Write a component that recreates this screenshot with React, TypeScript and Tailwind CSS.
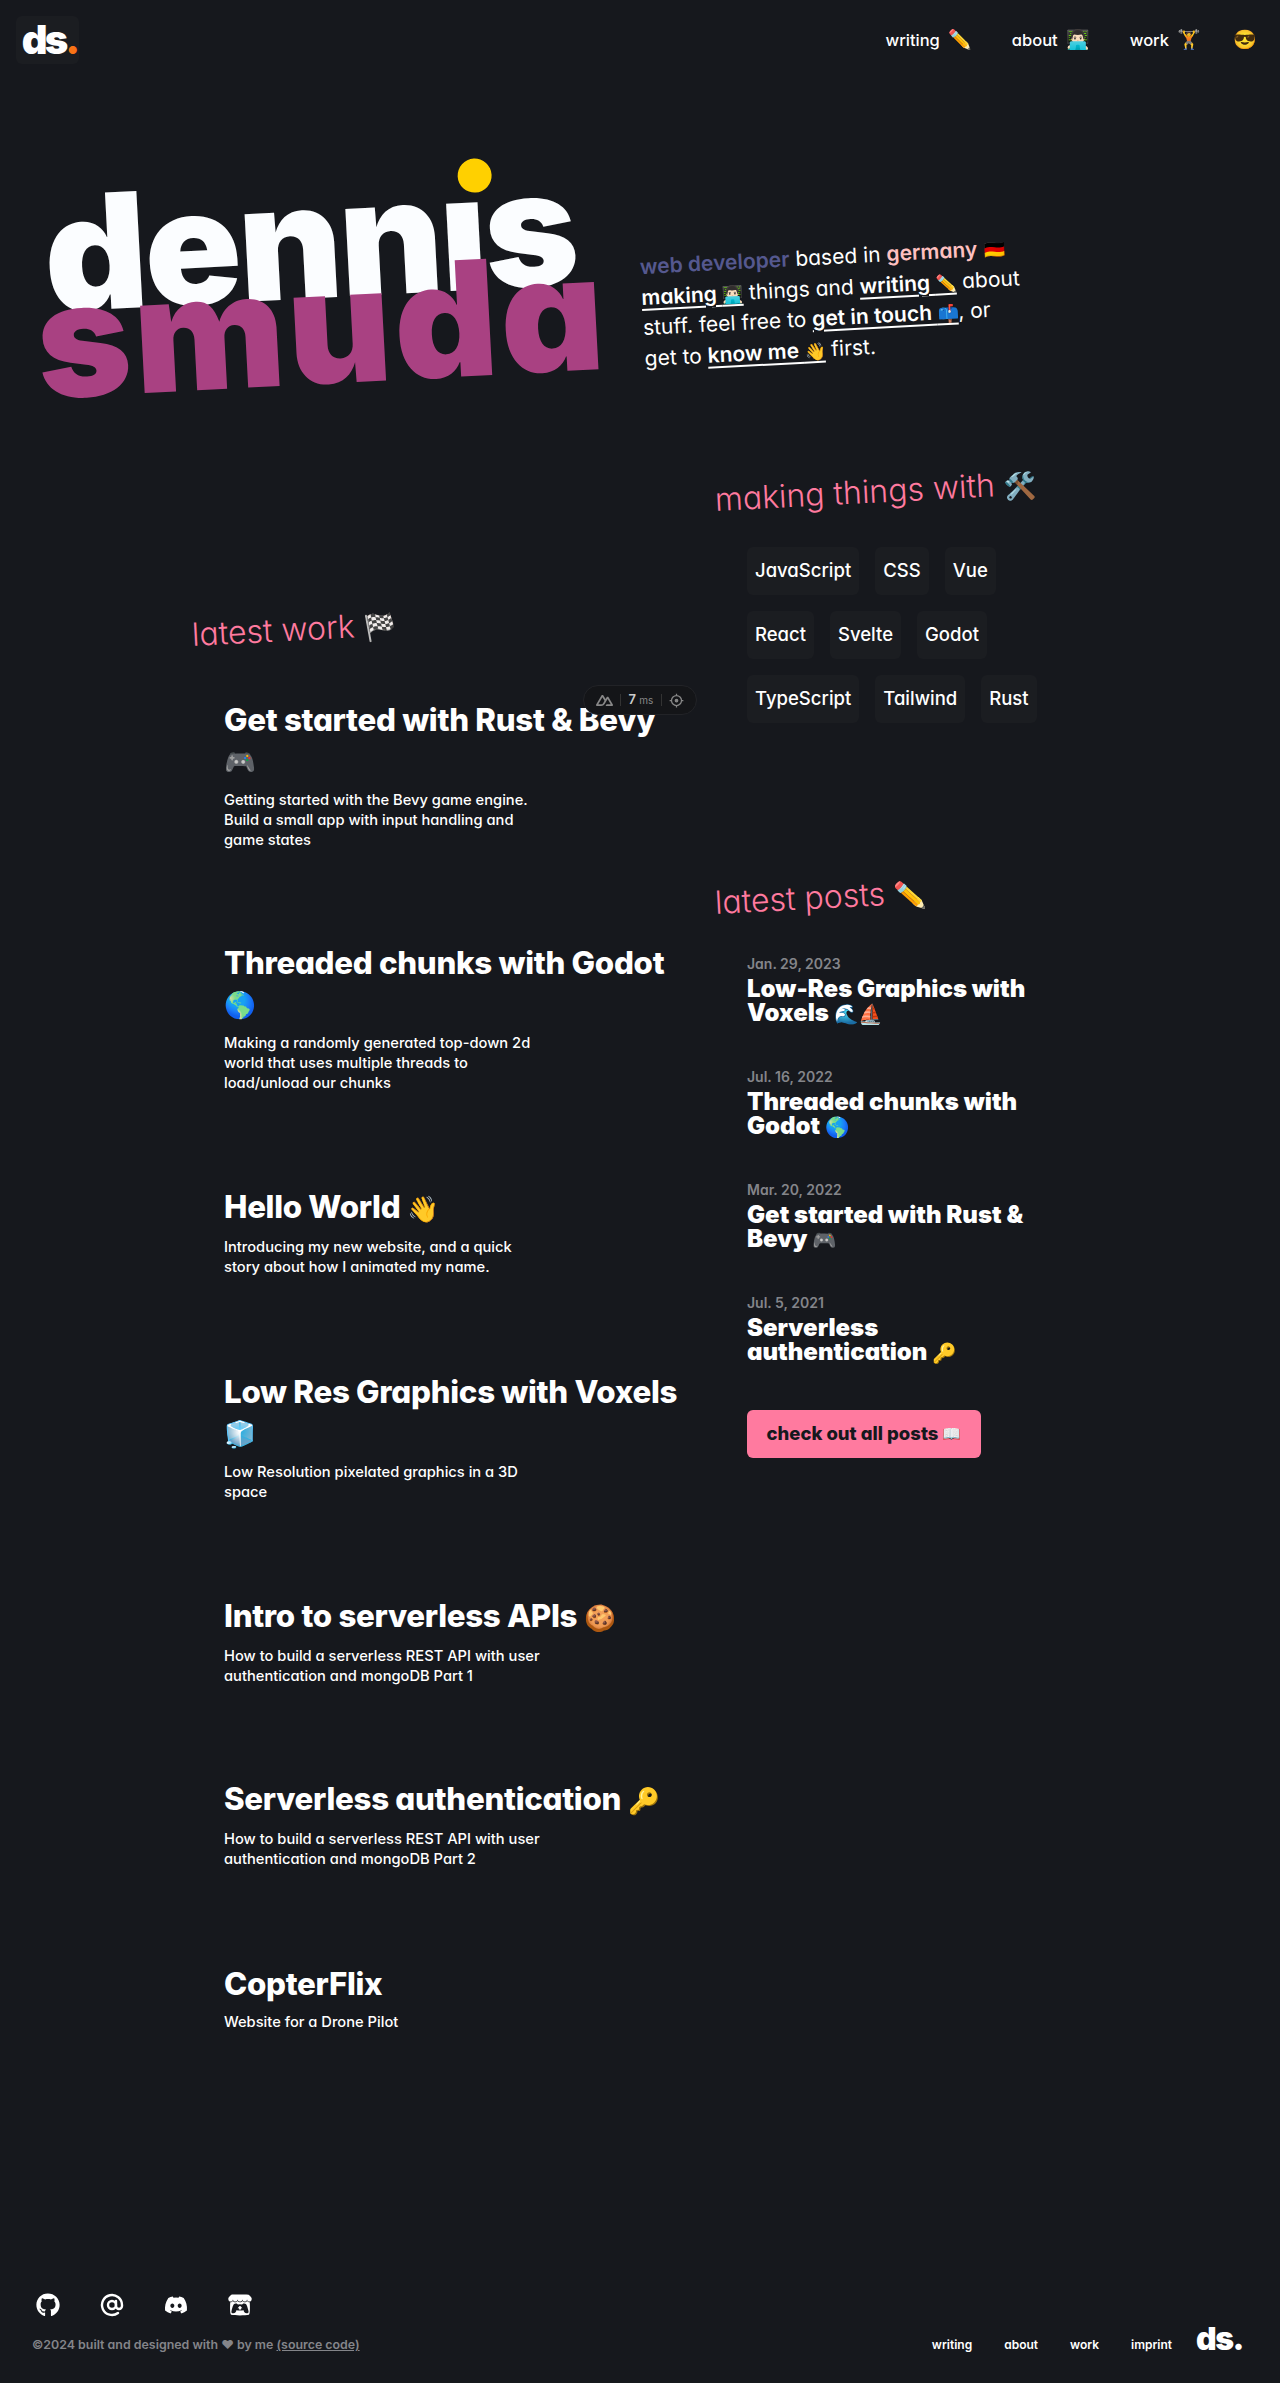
import React from "react";
import { AtSign } from "lucide-react";
import { FaDiscord, FaGithub, FaItchIo } from "react-icons/fa";
import { SiNuxtdotjs } from "react-icons/si";

const chips = [
  ["JavaScript", "CSS", "Vue"],
  ["React", "Svelte", "Godot"],
  ["TypeScript", "Tailwind", "Rust"],
];

const work = [
  { title: "Get started with Rust & Bevy", emoji: "🎮", text: "Getting started with the Bevy game engine. Build a small app with input handling and game states", h: "h-[243px]" },
  { title: "Threaded chunks with Godot", emoji: "🌎", text: "Making a randomly generated top-down 2d world that uses multiple threads to load/unload our chunks", h: "h-[244px]" },
  { title: "Hello World", emoji: "👋", text: "Introducing my new website, and a quick story about how I animated my name.", h: "h-[185px]" },
  { title: "Low Res Graphics with Voxels", emoji: "🧊", text: "Low Resolution pixelated graphics in a 3D space", h: "h-[224px]" },
  { title: "Intro to serverless APIs", emoji: "🍪", text: "How to build a serverless REST API with user authentication and mongoDB Part 1", h: "h-[183px]" },
  { title: "Serverless authentication", emoji: "🔑", text: "How to build a serverless REST API with user authentication and mongoDB Part 2", h: "h-[185px]" },
  { title: "CopterFlix", emoji: "", text: "Website for a Drone Pilot", h: "h-[100px]" },
];

const posts = [
  { date: "Jan. 29, 2023", title: "Low-Res Graphics with Voxels", emoji: "🌊⛵" },
  { date: "Jul. 16, 2022", title: "Threaded chunks with Godot", emoji: "🌎" },
  { date: "Mar. 20, 2022", title: "Get started with Rust & Bevy", emoji: "🎮" },
  { date: "Jul. 5, 2021", title: "Serverless authentication", emoji: "🔑" },
];

function Emoji({ children }: { children: React.ReactNode }) {
  return <span className="text-[0.82em]">{children}</span>;
}

function Heading({ children, className }: { children: React.ReactNode; className?: string }) {
  return (
    <h2 className={`w-fit origin-left -rotate-3 text-[32px] leading-10 font-light text-[#ff7a9f] ${className ?? ""}`}>
      {children}
    </h2>
  );
}

function Link({ children }: { children: React.ReactNode }) {
  return <a className="font-semibold text-white underline underline-offset-4">{children}</a>;
}

export default function App() {
  return (
    <div className="relative flex min-h-[2383px] flex-col bg-[#16181d] font-['Inter','Liberation_Sans',sans-serif] text-white [font-feature-settings:'cv11']">
      <header className="flex h-20 items-center justify-between pr-[23px] pl-4">
        <a className="flex h-12 w-[63px] items-center justify-center rounded-md bg-[#1b1d21] pl-1 text-[40px] font-black tracking-[-3px]">
          ds<span className="text-[#f97316]">.</span>
        </a>
        <nav className="flex items-center gap-10 text-[16.5px] font-medium">
          <a className="flex items-center gap-2">writing <span className="text-[19px]">✏️</span></a>
          <a className="flex items-center gap-2">about <span className="text-[19px]">👨🏻‍💻</span></a>
          <a className="flex items-center gap-2">work <span className="text-[19px]">🏋️</span></a>
          <span className="-ml-2 text-[19px]">😎</span>
        </nav>
      </header>

      <section className="flex h-[340px] items-start">
        <div className="relative mt-[96px] ml-[46px] w-[580px] -rotate-3 font-black">
          <div className="text-[160px] leading-[126px] tracking-[-3px] text-[#fbfdff]">dennıs</div>
          <div className="-mt-[40px] -ml-[12px] text-[160px] leading-[126px] tracking-[3px] text-[#a94182]">smuda</div>
          <span className="absolute top-[-10px] left-[417px] h-[34px] w-[34px] rounded-full bg-[#ffd000]" />
        </div>
        <p className="mt-[162px] ml-[16px] w-[385px] -rotate-3 text-[21px] leading-[29.5px]">
          <span className="font-semibold text-[#55588f]">web developer</span> based in{" "}
          <span className="font-semibold text-[#ffc0c0]">germany</span> <Emoji>🇩🇪</Emoji> <Link>making <Emoji>👨🏻‍💻</Emoji></Link> things and{" "}
          <Link>writing <Emoji>✏️</Emoji></Link> about stuff. feel free to <Link>get in touch <Emoji>📫</Emoji></Link>, or get to{" "}
          <Link>know me <Emoji>👋</Emoji></Link> first.
        </p>
      </section>

      <main className="mx-auto flex w-[896px] gap-[23px]">
        <div className="w-[500px] pt-[195px]">
          <Heading>latest work <Emoji>🏁</Emoji></Heading>
          <div className="relative mt-[43px] pl-8">
            {work.map((item) => (
              <article key={item.title} className={item.h}>
                <h3 className="w-[458px] text-[31.3px] leading-10 font-extrabold tracking-[-0.3px]">
                  {item.title} {item.emoji && <Emoji>{item.emoji}</Emoji>}
                </h3>
                <p className="mt-2 w-[320px] text-[14.7px] leading-5 font-medium">{item.text}</p>
              </article>
            ))}
            <div className="absolute top-[-15px] left-[391px] flex h-[30px] w-[114px] items-center justify-between rounded-full border border-[#222327] bg-[#141518] px-3 text-[#888]">
              <SiNuxtdotjs size={17} />
              <span className="h-3 w-px bg-[#333]" />
              <span className="text-[13px] font-semibold text-[#ccc]">7 <span className="text-[10px] font-normal text-[#888]">ms</span></span>
              <span className="h-3 w-px bg-[#333]" />
              <svg width="15" height="15" viewBox="0 0 24 24" fill="none" stroke="currentColor" strokeWidth="2">
                <circle cx="12" cy="12" r="8" />
                <circle cx="12" cy="12" r="2" fill="currentColor" />
                <path d="M12 1v3M12 20v3M1 12h3M20 12h3" />
              </svg>
            </div>
          </div>
        </div>

        <div className="w-[373px] pt-[60px]">
          <Heading>making things with <Emoji>🛠️</Emoji></Heading>
          <div className="mt-[25px] flex flex-col gap-4 pl-8">
            {chips.map((row) => (
              <div key={row[0]} className="flex gap-4">
                {row.map((chip) => (
                  <span key={chip} className="flex h-12 items-center rounded-md bg-[#1b1d21] px-2 text-[18.5px] font-medium">{chip}</span>
                ))}
              </div>
            ))}
          </div>

          <Heading className="mt-[160px]">latest posts <Emoji>✏️</Emoji></Heading>
          <div className="mt-[29px] flex flex-col gap-[41px] pl-8">
            {posts.map((post) => (
              <div key={post.date}>
                <div className="text-sm leading-5 font-semibold text-[#84858a]">{post.date}</div>
                <div className="mt-[3px] w-[295px] text-2xl leading-6 font-black">
                  {post.title} <Emoji>{post.emoji}</Emoji>
                </div>
              </div>
            ))}
            <a className="mt-[4px] flex h-12 w-[234px] items-center justify-center rounded-md bg-[#ff7a9f] text-[18.5px] font-extrabold text-[#16181d]">
              check out all posts <span className="ml-1 text-[0.82em]">📖</span>
            </a>
          </div>
        </div>
      </main>

      <footer className="mt-auto flex h-[103px] items-end justify-between pr-[37px] pb-[28px] pl-8">
        <div>
          <div className="flex gap-10 pl-1">
            <FaGithub size={24} />
            <AtSign size={24} strokeWidth={2.4} />
            <FaDiscord size={24} />
            <FaItchIo size={24} />
          </div>
          <p className="mt-[18px] text-[12.4px] leading-5 font-semibold text-[#84858a]">
            ©2024 built and designed with ♥ by me <span className="underline">(source code)</span>
          </p>
        </div>
        <div className="flex items-center gap-8 text-xs font-semibold">
          <a>writing</a>
          <a>about</a>
          <a>work</a>
          <a>imprint</a>
          <span className="-mt-3 -ml-2 text-[32px] leading-8 font-black tracking-[-1.5px]">ds.</span>
        </div>
      </footer>
    </div>
  );
}
